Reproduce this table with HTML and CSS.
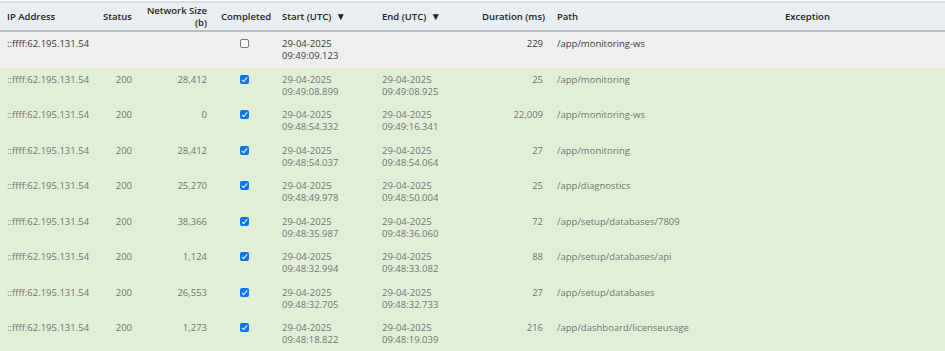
FILE: index.html
```html
<!DOCTYPE html>
<html>
<head>
<meta charset="utf-8">
<link rel="stylesheet" href="styles.css">
</head>
<body>
<table class="grid">
  <colgroup>
    <col class="c-ip"><col class="c-status"><col class="c-size"><col class="c-done"><col class="c-start"><col class="c-end"><col class="c-dur"><col class="c-path"><col class="c-exc">
  </colgroup>
  <thead>
    <tr>
      <th class="left">IP Address</th>
      <th class="right">Status</th>
      <th class="right">Network Size<br>(b)</th>
      <th class="center">Completed</th>
      <th class="left">Start (UTC) <span class="sort">▼</span></th>
      <th class="left">End (UTC) <span class="sort">▼</span></th>
      <th class="right">Duration (ms)</th>
      <th class="left">Path</th>
      <th class="center">Exception</th>
    </tr>
  </thead>
  <tbody>
    <tr class="pending">
      <td>::ffff:62.195.131.54</td><td class="right"></td><td class="right"></td>
      <td class="center"><span class="cb"></span></td>
      <td>29-04-2025<br>09:49:09.123</td><td></td>
      <td class="right">229</td><td>/app/monitoring-ws</td><td></td>
    </tr>
    <tr class="ok">
      <td>::ffff:62.195.131.54</td><td class="right">200</td><td class="right">28,412</td>
      <td class="center"><span class="cb on"></span></td>
      <td>29-04-2025<br>09:49:08.899</td><td>29-04-2025<br>09:49:08.925</td>
      <td class="right">25</td><td>/app/monitoring</td><td></td>
    </tr>
    <tr class="ok">
      <td>::ffff:62.195.131.54</td><td class="right">200</td><td class="right">0</td>
      <td class="center"><span class="cb on"></span></td>
      <td>29-04-2025<br>09:48:54.332</td><td>29-04-2025<br>09:49:16.341</td>
      <td class="right">22,009</td><td>/app/monitoring-ws</td><td></td>
    </tr>
    <tr class="ok">
      <td>::ffff:62.195.131.54</td><td class="right">200</td><td class="right">28,412</td>
      <td class="center"><span class="cb on"></span></td>
      <td>29-04-2025<br>09:48:54.037</td><td>29-04-2025<br>09:48:54.064</td>
      <td class="right">27</td><td>/app/monitoring</td><td></td>
    </tr>
    <tr class="ok">
      <td>::ffff:62.195.131.54</td><td class="right">200</td><td class="right">25,270</td>
      <td class="center"><span class="cb on"></span></td>
      <td>29-04-2025<br>09:48:49.978</td><td>29-04-2025<br>09:48:50.004</td>
      <td class="right">25</td><td>/app/diagnostics</td><td></td>
    </tr>
    <tr class="ok">
      <td>::ffff:62.195.131.54</td><td class="right">200</td><td class="right">38,366</td>
      <td class="center"><span class="cb on"></span></td>
      <td>29-04-2025<br>09:48:35.987</td><td>29-04-2025<br>09:48:36.060</td>
      <td class="right">72</td><td>/app/setup/databases/7809</td><td></td>
    </tr>
    <tr class="ok">
      <td>::ffff:62.195.131.54</td><td class="right">200</td><td class="right">1,124</td>
      <td class="center"><span class="cb on"></span></td>
      <td>29-04-2025<br>09:48:32.994</td><td>29-04-2025<br>09:48:33.082</td>
      <td class="right">88</td><td>/app/setup/databases/api</td><td></td>
    </tr>
    <tr class="ok">
      <td>::ffff:62.195.131.54</td><td class="right">200</td><td class="right">26,553</td>
      <td class="center"><span class="cb on"></span></td>
      <td>29-04-2025<br>09:48:32.705</td><td>29-04-2025<br>09:48:32.733</td>
      <td class="right">27</td><td>/app/setup/databases</td><td></td>
    </tr>
    <tr class="ok">
      <td>::ffff:62.195.131.54</td><td class="right">200</td><td class="right">1,273</td>
      <td class="center"><span class="cb on"></span></td>
      <td>29-04-2025<br>09:48:18.822</td><td>29-04-2025<br>09:48:19.039</td>
      <td class="right">216</td><td>/app/dashboard/licenseusage</td><td></td>
    </tr>
  </tbody>
</table>
</body>
</html>
```
FILE: styles.css
```css
html, body {
  margin: 0;
  padding: 0;
  background: #ffffff;
}
body {
  padding-top: 1px;
  font-family: "Open Sans", "Liberation Sans", sans-serif;
  font-size: 9.5px;
}
.grid {
  width: 945px;
  border-collapse: collapse;
  table-layout: fixed;
}
.c-ip { width: 95px; }
.c-status { width: 44px; }
.c-size { width: 75px; }
.c-done { width: 61px; }
.c-start { width: 100px; }
.c-end { width: 100px; }
.c-dur { width: 75px; }
.c-path { width: 120px; }
.c-exc { width: 275px; }

.grid thead tr {
  background: #e9eef2;
  border-top: 2px solid #d7dde3;
  border-bottom: 2px solid #bcbcbc;
}
.grid th {
  height: 27px;
  padding: 0 7px;
  font-weight: 600;
  color: #222;
  line-height: 12px;
  vertical-align: middle;
  white-space: nowrap;
}
.sort {
  font-size: 10px;
  margin-left: 2px;
}
.grid td {
  padding: 6px 7px 5.5px;
  line-height: 12px;
  vertical-align: top;
  white-space: nowrap;
  overflow: visible;
}
.left { text-align: left; }
.right { text-align: right; }
.center { text-align: center; }

.pending { background: #efefef; color: #3a3a3a; }
.ok { background: #e2efd7; color: #727272; }

.cb {
  display: inline-block;
  box-sizing: border-box;
  width: 9px;
  height: 9px;
  margin-top: 1px;
  border: 1px solid #7a7a7a;
  border-radius: 2px;
  background: #fff;
  vertical-align: top;
  position: relative;
}
.cb.on {
  border: none;
  background: #0b75f0;
}
.cb.on::after {
  content: "";
  position: absolute;
  left: 3px;
  top: 1px;
  width: 2px;
  height: 5px;
  border: solid #fff;
  border-width: 0 1.5px 1.5px 0;
  transform: rotate(40deg);
}
```
